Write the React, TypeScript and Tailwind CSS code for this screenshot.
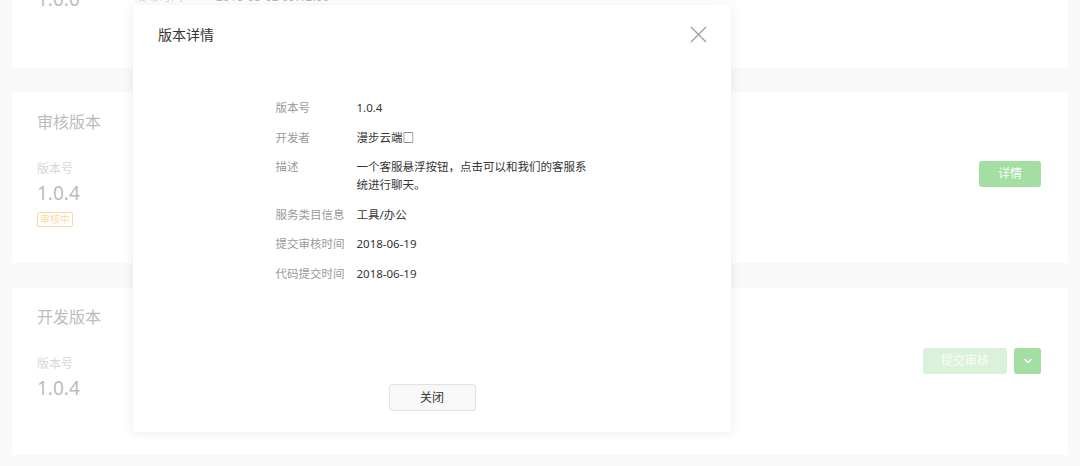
import React from 'react';

const font = { fontFamily: '"Noto Sans", "Noto Sans CJK SC", sans-serif' };

interface Row {
    label: string;
    value: React.ReactNode;
}

const rows: Row[] = [
    { label: '版本号', value: '1.0.4' },
    { label: '开发者', value: '漫步云端□' },
    { label: '描述', value: '一个客服悬浮按钮，点击可以和我们的客服系统进行聊天。' },
    { label: '服务类目信息', value: '工具/办公' },
    { label: '提交审核时间', value: '2018-06-19' },
    { label: '代码提交时间', value: '2018-06-19' },
];

const Chevron = () => (
    <svg width="12" height="12" viewBox="0 0 12 12" fill="none">
        <path d="M3 4.5L6 7.5L9 4.5" stroke="white" strokeWidth="1.6" strokeLinecap="round" strokeLinejoin="round" />
    </svg>
);

const CloseIcon = () => (
    <svg width="17" height="17" viewBox="0 0 17 17" fill="none">
        <path d="M1 1L16 16M16 1L1 16" stroke="#9b9b9b" strokeWidth="1.2" />
    </svg>
);

export default function App() {
    return (
        <div className="relative h-[466px] w-[1080px] overflow-hidden bg-[#f1f1f1]" style={font}>
            <div className="flex flex-col px-3">
                {/* 线上版本 - scrolled partly out of view */}
                <div className="-mt-[103px] h-[171px] bg-white px-[25px] pt-[20px]">
                    <div className="text-[16px] leading-[20px] text-[#353535]">线上版本</div>
                    <div className="mt-[30px] flex items-start">
                        <div className="w-[98px]">
                            <div className="text-[12px] leading-[16px] text-[#9a9a9a]">版本号</div>
                            <div className="mt-1 text-[19px] leading-[24px] text-[#555]">1.0.0</div>
                        </div>
                        <div className="flex flex-col gap-[6px] text-[12px] leading-[16px]">
                            <div className="flex">
                                <span className="w-[81px] text-[#9a9a9a]">发布者</span>
                                <span className="text-[#555]">漫步云端</span>
                            </div>
                            <div className="flex">
                                <span className="w-[81px] text-[#9a9a9a]">发布时间</span>
                                <span className="text-[#555]">2018-05-02 09:12:00</span>
                            </div>
                        </div>
                    </div>
                </div>

                {/* 审核版本 */}
                <div className="mt-[24px] h-[171px] bg-white pl-[25px] pr-[27px] pt-[20px]">
                    <div className="text-[16px] leading-[20px] text-[#555]">审核版本</div>
                    <div className="mt-[29px] flex items-start justify-between">
                        <div>
                            <div className="text-[12px] leading-[16px] text-[#9a9a9a]">版本号</div>
                            <div className="mt-1 text-[19px] leading-[24px] text-[#555]">1.0.4</div>
                            <div className="mt-[5px] inline-flex h-[15px] items-center rounded-[2px] border border-[#f5a623] px-[2px] text-[10px] leading-none text-[#f5a623]">审核中</div>
                        </div>
                        <button className="h-[26px] w-[62px] rounded-[3px] bg-[#1aad19] text-[12px] text-white">详情</button>
                    </div>
                </div>

                {/* 开发版本 */}
                <div className="mt-[25px] h-[167px] bg-white pl-[25px] pr-[27px] pt-[19px]">
                    <div className="text-[16px] leading-[20px] text-[#555]">开发版本</div>
                    <div className="mt-[29px] flex items-start justify-between">
                        <div>
                            <div className="text-[12px] leading-[16px] text-[#9a9a9a]">版本号</div>
                            <div className="mt-1 text-[19px] leading-[24px] text-[#555]">1.0.4</div>
                        </div>
                        <div className="-mt-[8px] flex gap-[7px]">
                            <button className="h-[26px] w-[84px] rounded-[3px] bg-[#1aad19]/40 text-[12px] text-white/80">提交审核</button>
                            <button className="flex h-[26px] w-[27px] items-center justify-center rounded-[3px] bg-[#1aad19]">
                                <Chevron />
                            </button>
                        </div>
                    </div>
                </div>
            </div>

            {/* mask */}
            <div className="absolute inset-0 bg-white/60" />

            {/* dialog */}
            <div className="absolute left-[133px] top-[5px] flex h-[427px] w-[598px] flex-col rounded-[4px] bg-white shadow-[0_1px_12px_rgba(0,0,0,0.08)]">
                <div className="flex h-[58px] items-center justify-between pl-[25px] pr-[24px]">
                    <span className="text-[14px] text-[#353535]">版本详情</span>
                    <button className="flex items-center"><CloseIcon /></button>
                </div>
                <div className="mt-[36px] flex flex-1 justify-center">
                    <div className="flex w-[313px] flex-col gap-[11.5px] text-[11.5px] leading-[18px]">
                        {rows.map((row) => (
                            <div key={row.label} className="flex">
                                <div className="w-[81px] shrink-0 text-[#9a9a9a]">{row.label}</div>
                                <div className="w-[232px] text-[#353535]">{row.value}</div>
                            </div>
                        ))}
                    </div>
                </div>
                <div className="flex justify-center pb-[21px]">
                    <button className="h-[27px] w-[87px] rounded-[3px] border border-[#e2e2e2] bg-[#f8f8f8] text-[12px] text-[#353535]">关闭</button>
                </div>
            </div>
        </div>
    );
}
